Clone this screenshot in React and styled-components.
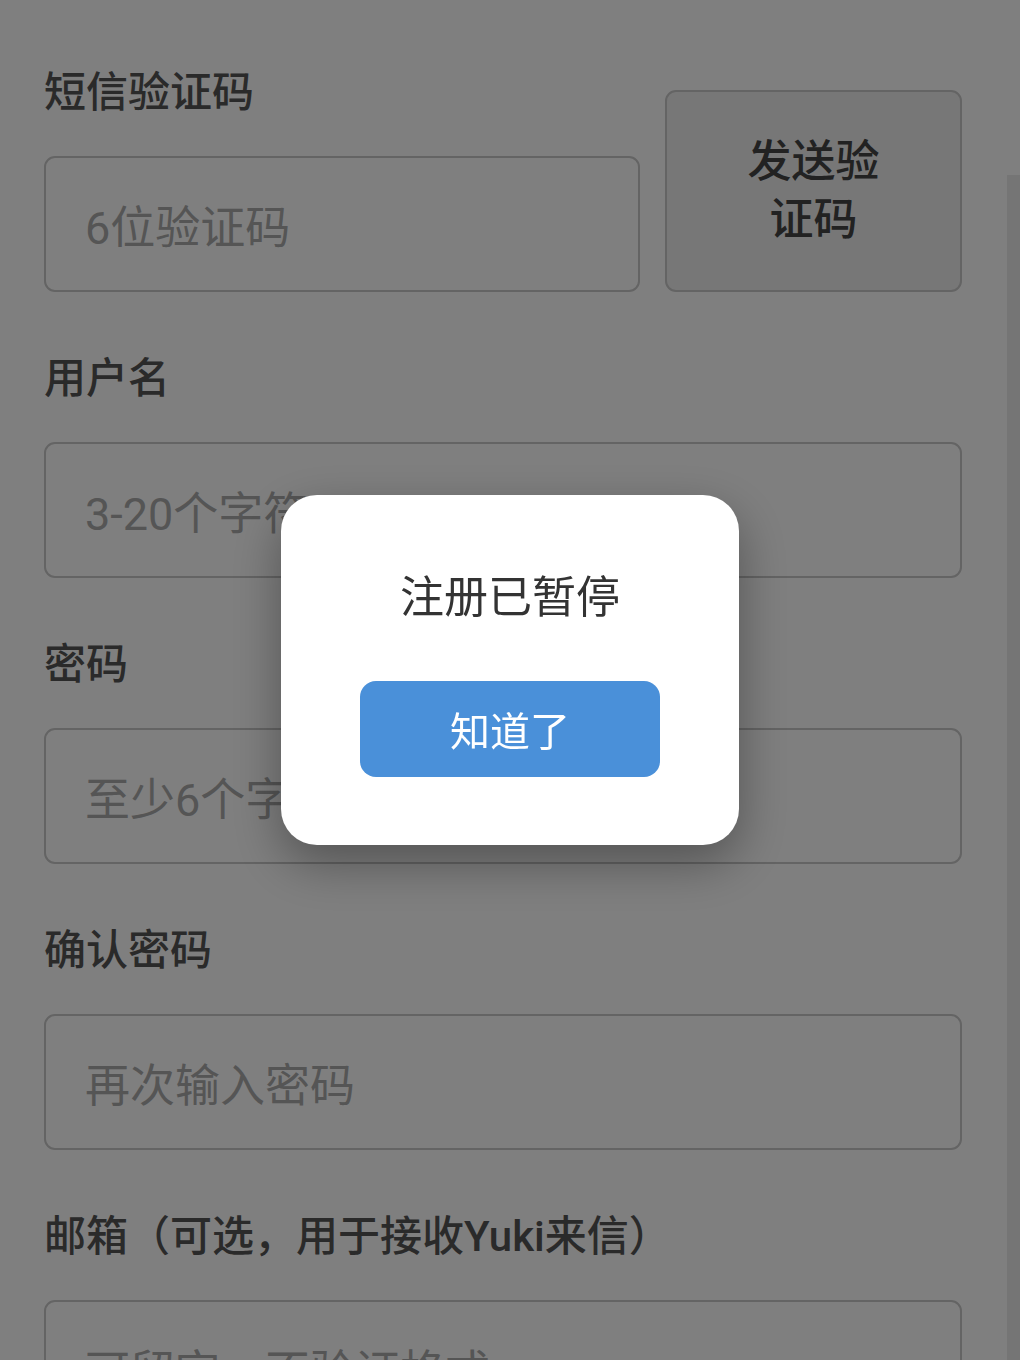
import styled, { createGlobalStyle } from "styled-components";

const GlobalStyle = createGlobalStyle`
  html, body {
    margin: 0;
    padding: 0;
    background: #fff;
  }
  body {
    font-family: Roboto, "Noto Sans CJK SC", "Noto Sans", sans-serif;
  }
  * {
    box-sizing: border-box;
  }
`;

const Page = styled.div`
  position: relative;
  width: 1020px;
  height: 1360px;
  overflow: hidden;
  background: #fff;
`;

const Form = styled.main`
  width: 1007px;
  padding: 64px 45px 0 44px;
  display: flex;
  flex-direction: column;
  gap: 58px;
`;

const Field = styled.div`
  display: flex;
  flex-direction: column;
  gap: 35px;
`;

const CodeRow = styled.div`
  display: flex;
  align-items: flex-end;
  gap: 25px;
`;

const Grow = styled.div`
  flex: 1;
  display: flex;
  flex-direction: column;
  gap: 35px;
`;

const Label = styled.label`
  font-size: 42px;
  line-height: 57px;
  font-weight: 500;
  color: #555;
`;

const Input = styled.div`
  height: 136px;
  border: 2px solid #c8c8c8;
  border-radius: 11px;
  padding: 0 39px;
  display: flex;
  align-items: center;
  font-size: 45px;
  color: #aaa;
  white-space: nowrap;
  overflow: hidden;
`;

const SendButton = styled.button`
  width: 297px;
  flex-shrink: 0;
  padding: 41px 60px;
  border: 2px solid #c8c8c8;
  border-radius: 11px;
  background: #eee;
  color: #444;
  font-family: inherit;
  font-size: 44px;
  line-height: 58px;
  font-weight: 500;
  text-align: center;
`;

const ScrollThumb = styled.div`
  position: absolute;
  top: 175px;
  right: 0;
  bottom: 0;
  width: 13px;
  background: #ebebeb;
`;

const Overlay = styled.div`
  position: fixed;
  inset: 0;
  background: rgba(0, 0, 0, 0.5);
  display: flex;
  justify-content: center;
  align-items: center;
  padding-bottom: 20px;
`;

const Dialog = styled.div`
  width: 458px;
  padding: 72px 0 68px;
  background: #fff;
  border-radius: 36px;
  box-shadow: 0 18px 50px rgba(0, 0, 0, 0.35);
  display: flex;
  flex-direction: column;
  align-items: center;
  gap: 52px;
`;

const DialogTitle = styled.div`
  font-size: 44px;
  line-height: 62px;
  color: #333;
`;

const OkButton = styled.button`
  width: 300px;
  height: 96px;
  border: none;
  border-radius: 16px;
  background: #4a90d9;
  color: #fff;
  font-family: inherit;
  font-size: 40px;
  font-weight: 400;
`;

const fields = [
  { label: "用户名", placeholder: "3-20个字符" },
  { label: "密码", placeholder: "至少6个字符" },
  { label: "确认密码", placeholder: "再次输入密码" },
  { label: "邮箱（可选，用于接收Yuki来信）", placeholder: "可留空，不验证格式" },
];

export default function App() {
  return (
    <>
      <GlobalStyle />
      <Page>
        <Form>
          <CodeRow>
            <Grow>
              <Label>短信验证码</Label>
              <Input>6位验证码</Input>
            </Grow>
            <SendButton>发送验证码</SendButton>
          </CodeRow>
          {fields.map((f) => (
            <Field key={f.label}>
              <Label>{f.label}</Label>
              <Input>{f.placeholder}</Input>
            </Field>
          ))}
        </Form>
        <ScrollThumb />
      </Page>
      <Overlay>
        <Dialog>
          <DialogTitle>注册已暂停</DialogTitle>
          <OkButton>知道了</OkButton>
        </Dialog>
      </Overlay>
    </>
  );
}
